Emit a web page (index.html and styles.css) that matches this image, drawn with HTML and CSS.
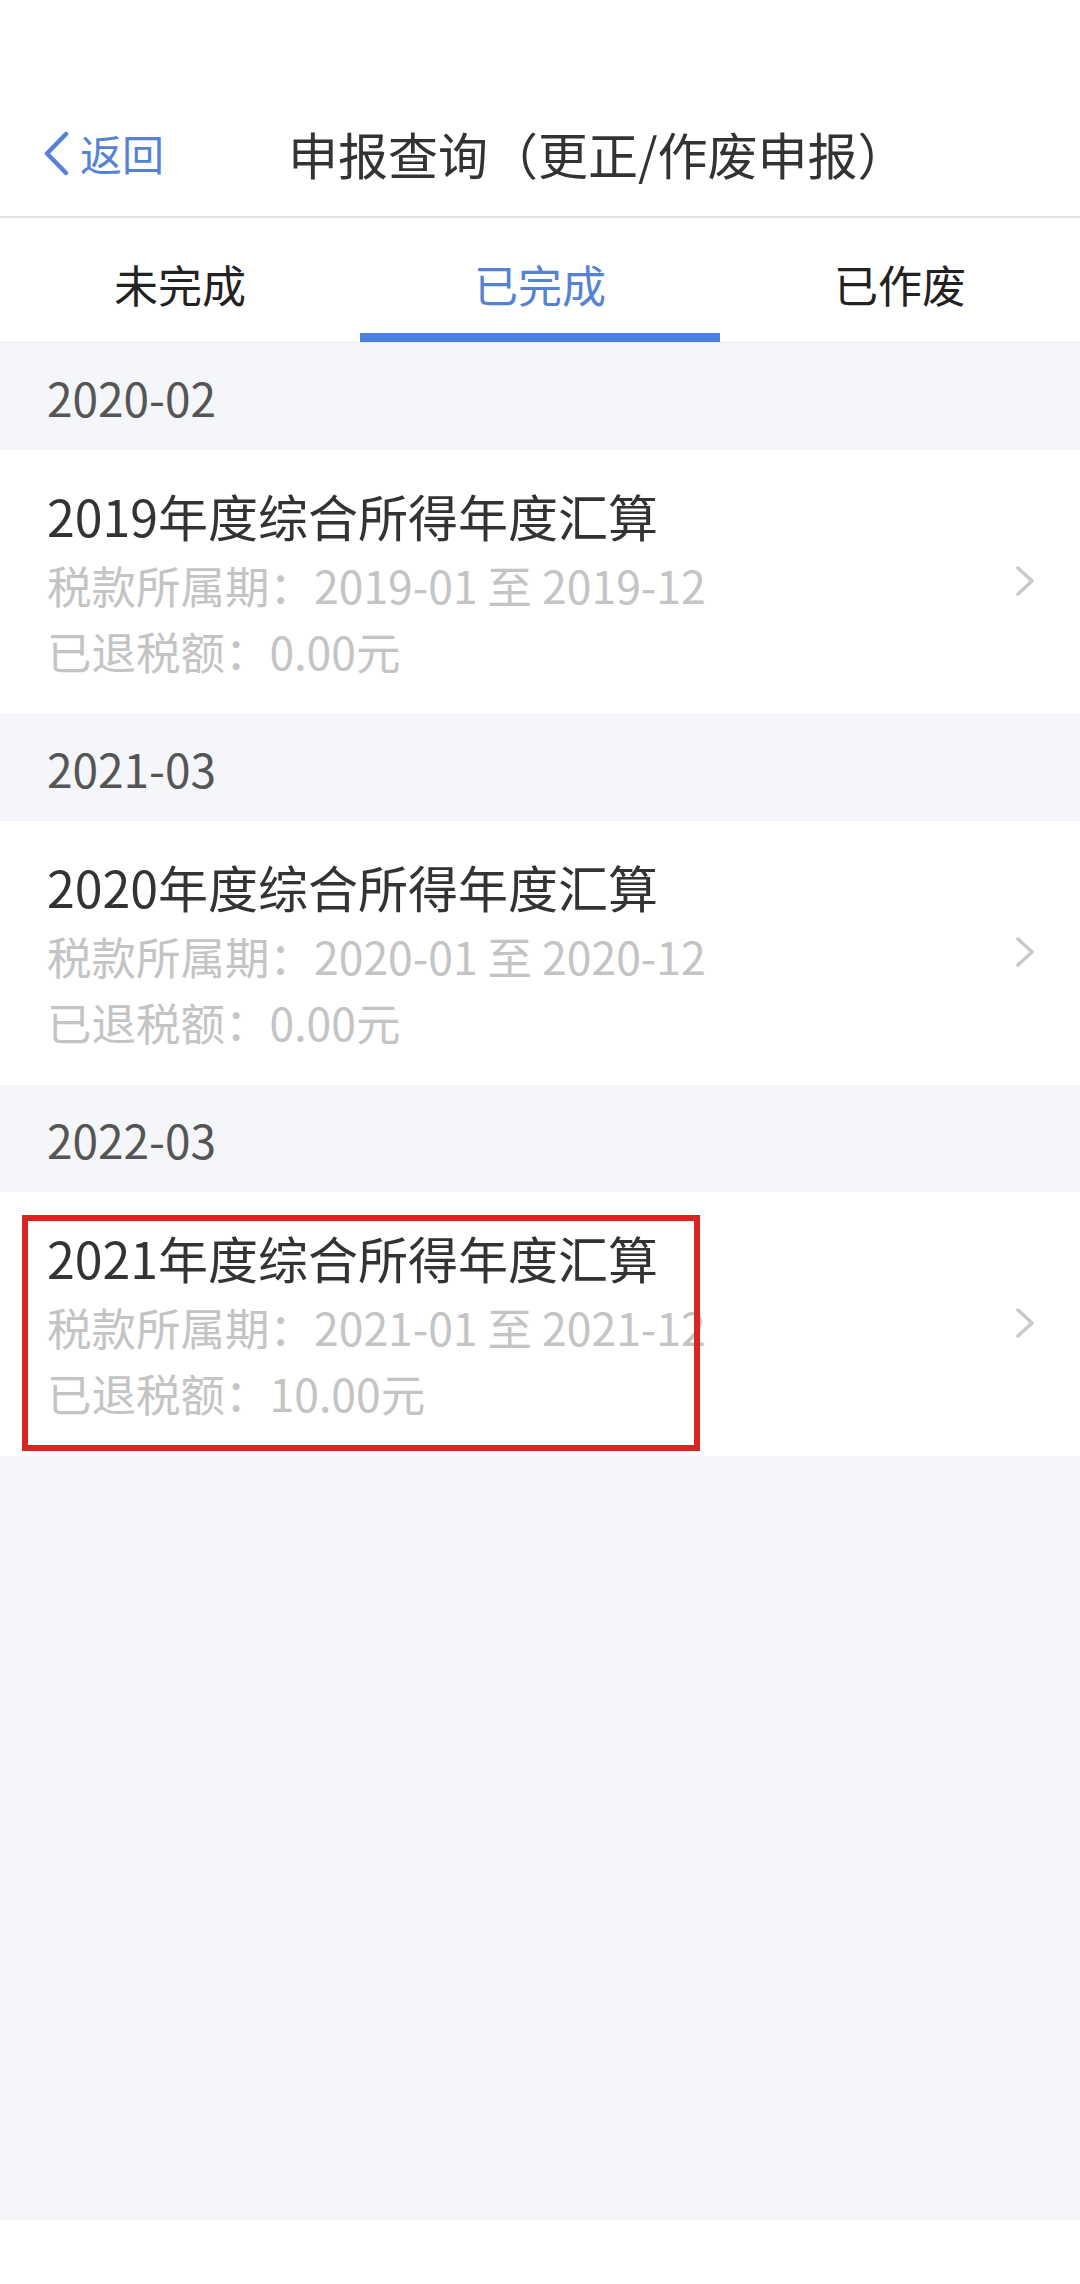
FILE: index.html
```html
<!DOCTYPE html>
<html lang="zh-CN">
<head>
<meta charset="utf-8">
<title>申报查询</title>
<link rel="stylesheet" href="styles.css">
</head>
<body>
<div class="statusbar"></div>
<header class="nav">
  <div class="back">
    <svg class="back-icon" width="27" height="45" viewBox="0 0 27 45"><polyline points="23,3 4,22.5 23,42" fill="none" stroke="#5582d6" stroke-width="4.5" stroke-linecap="round" stroke-linejoin="round"/></svg>
    <span class="back-text">返回</span>
  </div>
  <div class="nav-title">申报查询（更正/作废申报）</div>
</header>
<nav class="tabs">
  <div class="tab">未完成</div>
  <div class="tab active">已完成</div>
  <div class="tab">已作废</div>
</nav>
<main class="list">
  <div class="date-head">2020-02</div>
  <div class="card">
    <div class="card-body">
      <div class="card-title">2019年度综合所得年度汇算</div>
      <div class="card-sub">税款所属期：2019-01 至 2019-12</div>
      <div class="card-sub">已退税额：0.00元</div>
    </div>
    <svg class="arrow" width="20" height="32" viewBox="0 0 20 32"><polyline points="3,3 17,16 3,29" fill="none" stroke="#c9c9c9" stroke-width="3.5" stroke-linecap="round" stroke-linejoin="round"/></svg>
  </div>
  <div class="date-head">2021-03</div>
  <div class="card">
    <div class="card-body">
      <div class="card-title">2020年度综合所得年度汇算</div>
      <div class="card-sub">税款所属期：2020-01 至 2020-12</div>
      <div class="card-sub">已退税额：0.00元</div>
    </div>
    <svg class="arrow" width="20" height="32" viewBox="0 0 20 32"><polyline points="3,3 17,16 3,29" fill="none" stroke="#c9c9c9" stroke-width="3.5" stroke-linecap="round" stroke-linejoin="round"/></svg>
  </div>
  <div class="date-head">2022-03</div>
  <div class="card">
    <div class="card-body">
      <div class="card-title">2021年度综合所得年度汇算</div>
      <div class="card-sub">税款所属期：2021-01 至 2021-12</div>
      <div class="card-sub">已退税额：10.00元</div>
    </div>
    <svg class="arrow" width="20" height="32" viewBox="0 0 20 32"><polyline points="3,3 17,16 3,29" fill="none" stroke="#c9c9c9" stroke-width="3.5" stroke-linecap="round" stroke-linejoin="round"/></svg>
    <div class="highlight"></div>
  </div>
</main>
<div class="home-area"></div>
</body>
</html>
```
FILE: styles.css
```css
* { box-sizing: border-box; }
html, body { margin: 0; padding: 0; }
body {
  width: 1080px;
  height: 2284px;
  display: flex;
  flex-direction: column;
  background: #f5f6fa;
  font-family: "Noto Sans CJK SC", "Noto Sans", sans-serif;
  color: #333;
}
.statusbar { height: 90px; background: #fff; flex: none; }
.nav {
  height: 128px;
  flex: none;
  background: #fff;
  border-bottom: 2px solid #e2e2e2;
  display: flex;
  align-items: center;
  padding-left: 43px;
}
.back { display: flex; align-items: center; gap: 10px; color: #5582d6; }
.back-icon { display: block; }
.back-text { font-size: 42px; line-height: 50px; }
.nav-title { margin-left: 124px; font-size: 50px; line-height: 60px; color: #333; }
.tabs {
  height: 125px;
  flex: none;
  background: #fff;
  border-bottom: 1px solid #ebebeb;
  display: flex;
}
.tab {
  flex: 1;
  display: flex;
  align-items: center;
  justify-content: center;
  padding-top: 17px;
  border-bottom: 9px solid transparent;
  font-size: 44px;
  color: #222;
}
.tab.active { color: #5582d6; border-bottom-color: #4c7fe0; }
.list { flex: 1; display: flex; flex-direction: column; }
.date-head {
  height: 107px;
  display: flex;
  align-items: center;
  padding-left: 47px;
  font-size: 46px;
  color: #555;
}
.card {
  position: relative;
  background: #fff;
  display: flex;
  align-items: center;
  padding: 28px 45px 30px 47px;
}
.card-body { flex: 1; }
.card-title { font-size: 50px; line-height: 74px; color: #333; white-space: nowrap; }
.card-sub { font-size: 44.5px; line-height: 66px; color: #c4c4c4; white-space: nowrap; }
.arrow { display: block; flex: none; }
.highlight {
  position: absolute;
  left: 22px;
  top: 23px;
  width: 678px;
  height: 236px;
  border: 6px solid #d6261f;
}
.home-area { height: 64px; background: #fff; flex: none; }
```
